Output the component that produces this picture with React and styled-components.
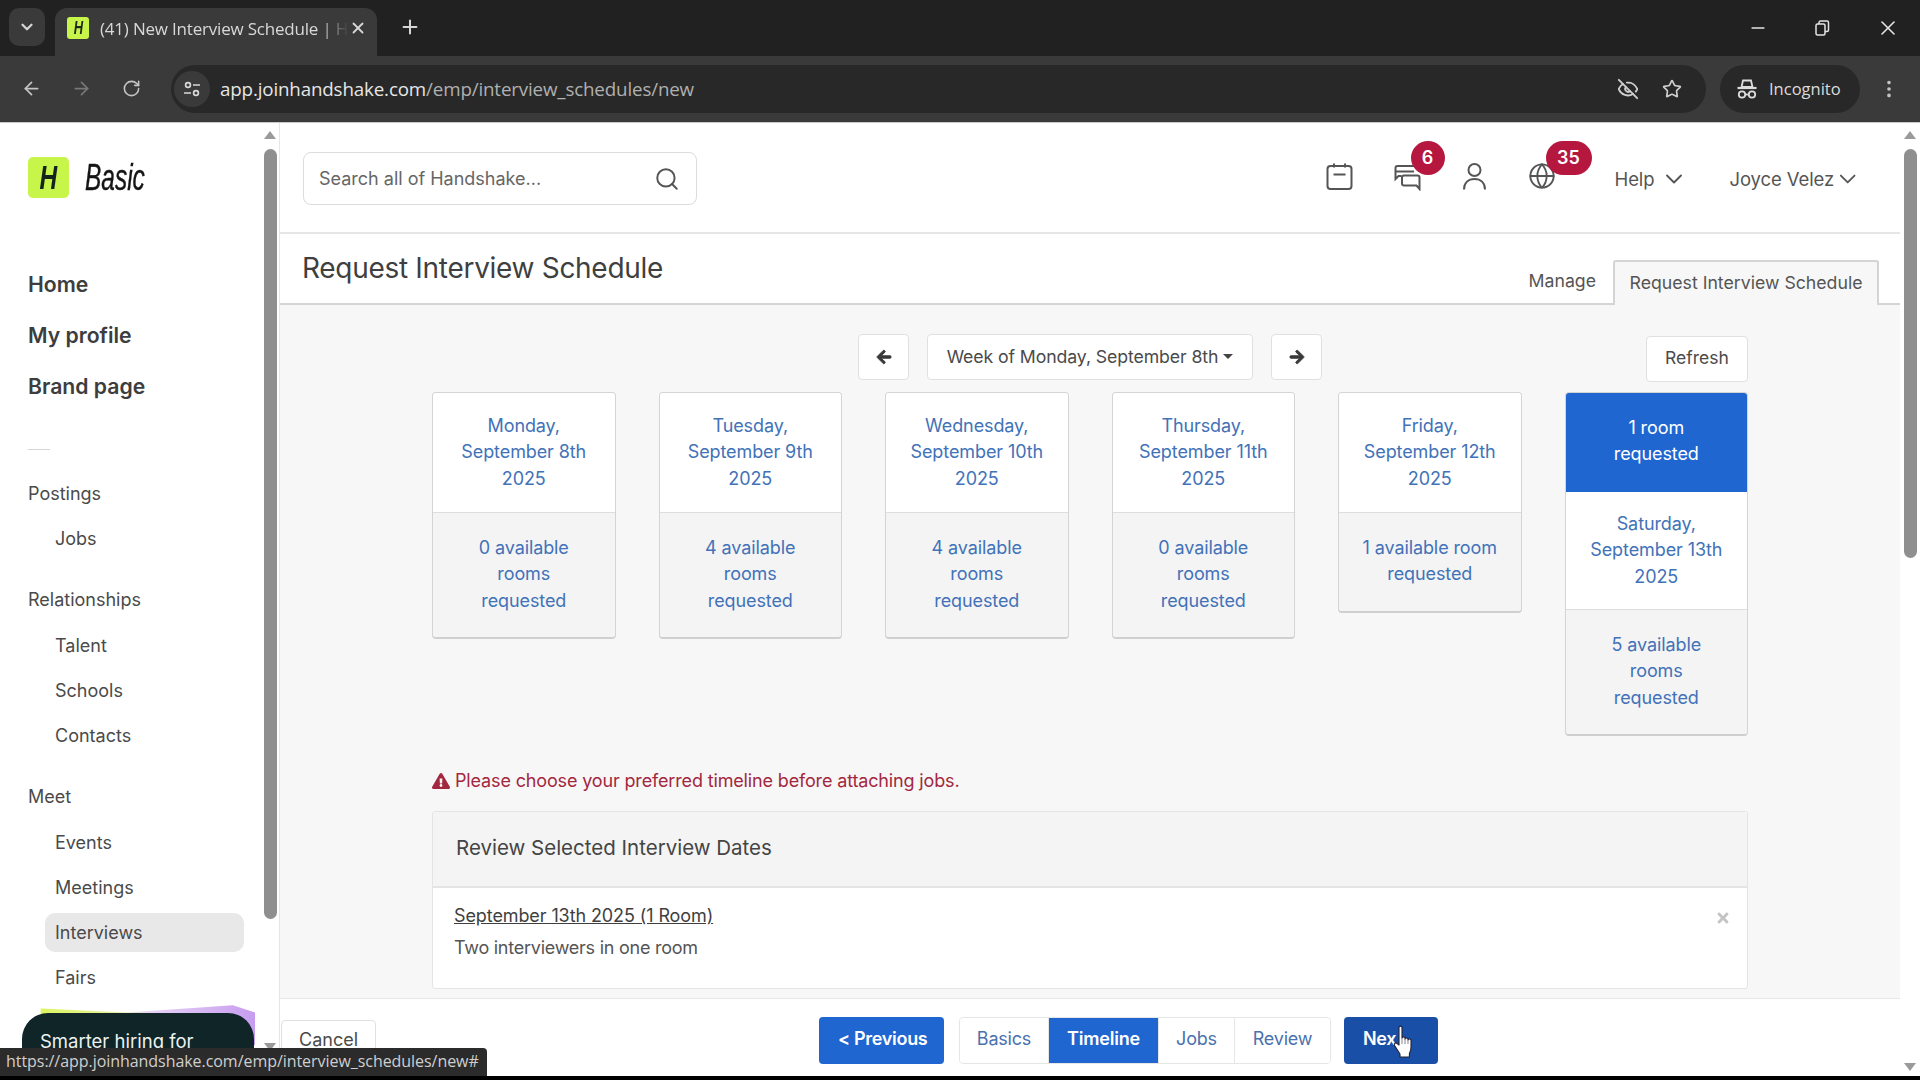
import styled, { createGlobalStyle } from "styled-components";
import {
  ArrowLeft,
  ArrowRight,
  ChevronDown,
  EyeOff,
  Globe,
  Minus,
  MoreVertical,
  Plus,
  RotateCw,
  Search,
  Star,
  X,
} from "lucide-react";
import { FaArrowLeft, FaArrowRight, FaExclamationTriangle, FaTimes } from "react-icons/fa";

const days = [
  { head: ["Monday,", "September 8th", "2025"], foot: ["0 available", "rooms", "requested"] },
  { head: ["Tuesday,", "September 9th", "2025"], foot: ["4 available", "rooms", "requested"] },
  { head: ["Wednesday,", "September 10th", "2025"], foot: ["4 available", "rooms", "requested"] },
  { head: ["Thursday,", "September 11th", "2025"], foot: ["0 available", "rooms", "requested"] },
  { head: ["Friday,", "September 12th", "2025"], foot: ["1 available room", "requested"] },
  {
    head: ["Saturday,", "September 13th", "2025"],
    foot: ["5 available", "rooms", "requested"],
    selected: ["1 room", "requested"],
  },
];

const navGroups = [
  { title: "Postings", items: ["Jobs"] },
  { title: "Relationships", items: ["Talent", "Schools", "Contacts"] },
  { title: "Meet", items: ["Events", "Meetings", "Interviews", "Fairs"] },
];

const App = () => {
  return (
    <>
      <GlobalStyle />
      <Frame>
        <TabStrip>
          <TabSearch>
            <ChevronDown size={18} strokeWidth={3} />
          </TabSearch>
          <BrowserTab>
            <Favicon>
              <NarrowH>H</NarrowH>
            </Favicon>
            <TabTitle>(41) New Interview Schedule | H</TabTitle>
            <X size={18} strokeWidth={2.4} />
          </BrowserTab>
          <NewTab>
            <Plus size={22} strokeWidth={2.2} />
          </NewTab>
          <WindowControls>
            <Minus size={20} />
            <RestoreIcon />
            <X size={24} strokeWidth={1.6} />
          </WindowControls>
        </TabStrip>

        <Toolbar>
          <ToolIcon>
            <ArrowLeft size={21} />
          </ToolIcon>
          <ToolIcon $dim>
            <ArrowRight size={21} />
          </ToolIcon>
          <ToolIcon>
            <RotateCw size={19} />
          </ToolIcon>
          <Omnibox>
            <SiteChip>
              <SiteIcon />
            </SiteChip>
            <Url>
              app.joinhandshake.com<UrlPath>/emp/interview_schedules/new</UrlPath>
            </Url>
            <OmniIcons>
              <EyeOff size={22} />
              <Star size={20} />
            </OmniIcons>
          </Omnibox>
          <IncognitoPill>
            <IncognitoIcon />
            Incognito
          </IncognitoPill>
          <ToolIcon>
            <MoreVertical size={22} />
          </ToolIcon>
        </Toolbar>

        <Page>
          <Sidebar>
            <SideContent>
              <LogoRow>
                <LogoMark>
                  <NarrowH>H</NarrowH>
                </LogoMark>
                <LogoWord>Basic</LogoWord>
              </LogoRow>
              <MainLink>Home</MainLink>
              <MainLink>My profile</MainLink>
              <MainLink>Brand page</MainLink>
              <SideDivider />
              {navGroups.map((group) => (
                <NavGroup key={group.title}>
                  <NavTitle>{group.title}</NavTitle>
                  {group.items.map((item) => (
                    <NavItem key={item} $active={item === "Interviews"}>
                      {item}
                    </NavItem>
                  ))}
                </NavGroup>
              ))}
              <PromoCard>Smarter hiring for</PromoCard>
            </SideContent>
            <ScrollTrack>
              <ScrollArrow />
              <ScrollThumb $height={770} />
              <ScrollArrow $down $push={124} />
            </ScrollTrack>
          </Sidebar>

          <Main>
            <Header>
              <SearchBox>
                <SearchText>Search all of Handshake...</SearchText>
                <Search size={26} strokeWidth={1.8} />
              </SearchBox>
              <HeaderIcons>
                <HeaderIcon>
                  <CalendarIcon />
                </HeaderIcon>
                <HeaderIcon>
                  <MessagesIcon />
                  <Badge>6</Badge>
                </HeaderIcon>
                <HeaderIcon>
                  <PersonIcon />
                </HeaderIcon>
                <HeaderIcon>
                  <Globe size={28} strokeWidth={1.6} />
                  <Badge $wide>35</Badge>
                </HeaderIcon>
              </HeaderIcons>
              <HeaderMenu $width={73} $gap={58}>
                Help <ChevronDown size={28} strokeWidth={1.6} />
              </HeaderMenu>
              <HeaderMenu $width={132} $gap={42}>
                Joyce Velez <ChevronDown size={28} strokeWidth={1.6} />
              </HeaderMenu>
            </Header>

            <TitleBar>
              <Title>Request Interview Schedule</Title>
              <TabLink>Manage</TabLink>
              <ActiveTab>Request Interview Schedule</ActiveTab>
            </TitleBar>

            <Content>
              <WeekNav>
                <WeekControls>
                  <SquareButton>
                    <FaArrowLeft size={16} stroke="currentColor" strokeWidth={30} />
                  </SquareButton>
                  <WeekSelect>
                    Week of Monday, September 8th
                    <Caret />
                  </WeekSelect>
                  <SquareButton>
                    <FaArrowRight size={16} stroke="currentColor" strokeWidth={30} />
                  </SquareButton>
                </WeekControls>
                <RefreshButton>Refresh</RefreshButton>
              </WeekNav>

              <WeekGrid>
                {days.map((day) => (
                  <DayCard key={day.head[1]}>
                    {day.selected && (
                      <DaySelected>
                        {day.selected.map((line) => (
                          <div key={line}>{line}</div>
                        ))}
                      </DaySelected>
                    )}
                    <DayHead $compact={!!day.selected}>
                      {day.head.map((line) => (
                        <div key={line}>{line}</div>
                      ))}
                    </DayHead>
                    <DayFoot>
                      {day.foot.map((line) => (
                        <div key={line}>{line}</div>
                      ))}
                    </DayFoot>
                  </DayCard>
                ))}
              </WeekGrid>

              <Warning>
                <FaExclamationTriangle size={18} />
                Please choose your preferred timeline before attaching jobs.
              </Warning>

              <ReviewPanel>
                <ReviewHead>Review Selected Interview Dates</ReviewHead>
                <ReviewBody>
                  <ReviewDate>September 13th 2025 (1 Room)</ReviewDate>
                  <ReviewNote>Two interviewers in one room</ReviewNote>
                  <RemoveIcon>
                    <FaTimes size={16} />
                  </RemoveIcon>
                </ReviewBody>
              </ReviewPanel>
            </Content>

            <Footer>
              <CancelButton>Cancel</CancelButton>
              <PrimaryButton $width={125}>&lt; Previous</PrimaryButton>
              <StepGroup>
                <Step $width={89}>Basics</Step>
                <Step $width={110} $active>
                  Timeline
                </Step>
                <Step $width={76}>Jobs</Step>
                <Step $width={95} $last>
                  Review
                </Step>
              </StepGroup>
              <PrimaryButton $width={94} $dark>
                Nex
                <HandCursor />
              </PrimaryButton>
            </Footer>
          </Main>

          <PageScroll>
            <ScrollArrow />
            <ScrollThumb $height={409} />
            <ScrollArrow $down $push={505} />
          </PageScroll>

          <StatusBubble>https://app.joinhandshake.com/emp/interview_schedules/new#</StatusBubble>
        </Page>
        <BottomEdge />
      </Frame>
    </>
  );
};

export default App;

const RestoreIcon = () => (
  <svg width="20" height="20" viewBox="0 0 20 20" fill="none" stroke="currentColor" strokeWidth="1.5">
    <rect x="4" y="6" width="9" height="11" rx="1.5" />
    <path d="M7 6V4.5C7 3.7 7.7 3 8.5 3H15c.8 0 1.5.7 1.5 1.5V12c0 .8-.7 1.5-1.5 1.5h-2" />
  </svg>
);

const SiteIcon = () => (
  <svg width="20" height="20" viewBox="0 0 20 20" fill="none" stroke="currentColor" strokeWidth="1.7">
    <circle cx="6" cy="6" r="2.4" />
    <path d="M11 6h7M2 14h7" />
    <circle cx="14" cy="14" r="2.4" />
  </svg>
);

const IncognitoIcon = () => (
  <svg width="24" height="24" viewBox="0 0 24 24" fill="none" stroke="currentColor" strokeWidth="1.8">
    <path d="M8 3.5h8l1.5 6.5h-11L8 3.5z" />
    <path d="M2.5 11h19" strokeWidth="2.2" />
    <circle cx="7" cy="17.5" r="3.2" />
    <circle cx="17" cy="17.5" r="3.2" />
    <path d="M10.2 17.5h3.6" />
  </svg>
);

const CalendarIcon = () => (
  <svg width="29" height="29" viewBox="0 0 29 29" fill="none" stroke="currentColor" strokeWidth="2">
    <rect x="2.5" y="4" width="24" height="23" rx="3" />
    <path d="M9 1.5v4M20 1.5v4M8.5 12.5h12" />
  </svg>
);

const MessagesIcon = () => (
  <svg width="29" height="29" viewBox="0 0 29 29" fill="none" stroke="currentColor" strokeWidth="2">
    <path d="M21 4H4.5C3.4 4 2.5 4.9 2.5 6v11l3-3h3" />
    <path d="M2.5 9.5H21" />
    <path d="M9 15.5c0-1.1.9-2 2-2h13.5c1.1 0 2 .9 2 2V27l-3-3.5H11c-1.1 0-2-.9-2-2v-6z" />
  </svg>
);

const PersonIcon = () => (
  <svg width="29" height="29" viewBox="0 0 29 29" fill="none" stroke="currentColor" strokeWidth="2">
    <circle cx="14.5" cy="8" r="6" />
    <path d="M4 27.5c0-7 4.5-10.5 10.5-10.5S25 20.5 25 27.5" />
  </svg>
);

const HandCursor = () => (
  <CursorSvg width="24" height="34" viewBox="0 0 24 34">
    <path
      d="M7 2.5c0-1.8 3-1.8 3 0V13c0-1.4 3-1.4 3 0v1c0-1.4 3-1.4 3 0v1c0-1.4 3-1.4 3 0v7c0 3-.8 4.6-1.6 6.6V32H8v-3c-1.6-2.4-3.6-5.6-5.4-8.4-1.2-2 1.2-3.6 2.6-2L7 20V2.5z"
      fill="#fff"
      stroke="#223"
      strokeWidth="1.1"
      strokeLinejoin="round"
    />
    <path d="M10 13v6M13 14v5M16 15v4" stroke="#667" strokeWidth="0.8" />
  </CursorSvg>
);

const GlobalStyle = createGlobalStyle`
  html, body {
    margin: 0;
    padding: 0;
    background: #000;
  }
  * {
    box-sizing: border-box;
  }
`;

const Frame = styled.div`
  width: 1920px;
  height: 1080px;
  display: flex;
  flex-direction: column;
  overflow: hidden;
  font-family: Inter, "Liberation Sans", sans-serif;
  color: #4a4a4a;
`;

const TabStrip = styled.div`
  height: 56px;
  flex: none;
  display: flex;
  align-items: flex-end;
  background: #212121;
  color: #d6d6d6;
  padding-left: 9px;
`;

const TabSearch = styled.div`
  width: 36px;
  height: 38px;
  margin-bottom: 10px;
  border-radius: 10px;
  background: #3a3a3a;
  display: flex;
  align-items: center;
  justify-content: center;
`;

const BrowserTab = styled.div`
  width: 322px;
  height: 48px;
  margin-left: 10px;
  padding: 0 10px 8px 12px;
  border-radius: 12px 12px 0 0;
  background: #3a3a3a;
  display: flex;
  align-items: center;
`;

const NarrowH = styled.span`
  display: inline-block;
  transform: scaleX(0.72);
`;

const Favicon = styled.div`
  width: 22px;
  height: 22px;
  flex: none;
  border-radius: 3px;
  background: #c8f54a;
  color: #1c2a1c;
  font: italic 700 18px/22px "Liberation Sans", sans-serif;
  text-align: center;
`;

const TabTitle = styled.div`
  flex: 1;
  margin-left: 11px;
  font: 17px "Open Sans", sans-serif;
  letter-spacing: -0.2px;
  white-space: nowrap;
  overflow: hidden;
  color: #d8d8d8;
  -webkit-mask-image: linear-gradient(90deg, #000 88%, transparent 100%);
`;

const NewTab = styled.div`
  margin: 0 0 10px 22px;
  height: 38px;
  display: flex;
  align-items: center;
`;

const WindowControls = styled.div`
  margin-left: auto;
  height: 56px;
  width: 172px;
  padding-right: 20px;
  display: flex;
  align-items: center;
  justify-content: space-between;
  color: #e4e4e4;
`;

const Toolbar = styled.div`
  height: 67px;
  flex: none;
  display: flex;
  align-items: center;
  padding: 0 0 1px 6px;
  background: #3a3a3a;
  border-bottom: 1px solid #c9c9c9;
  color: #c4c4c4;
`;

const ToolIcon = styled.div`
  width: 50px;
  height: 40px;
  flex: none;
  display: flex;
  align-items: center;
  justify-content: center;
  color: ${(props) => (props.$dim ? "#777" : "#c4c4c4")};
`;

const Omnibox = styled.div`
  width: 1535px;
  height: 48px;
  margin-left: 15px;
  padding: 0 24px 0 3px;
  border-radius: 24px;
  background: #282828;
  display: flex;
  align-items: center;
`;

const SiteChip = styled.div`
  width: 36px;
  height: 36px;
  border-radius: 50%;
  background: #3a3a3a;
  display: flex;
  align-items: center;
  justify-content: center;
  color: #d8d8d8;
`;

const Url = styled.div`
  margin-left: 10px;
  font: 18.75px "Open Sans", sans-serif;
  letter-spacing: -0.15px;
  color: #e6e6e6;
`;

const UrlPath = styled.span`
  color: #b0b0b0;
`;

const OmniIcons = styled.div`
  margin-left: auto;
  display: flex;
  align-items: center;
  gap: 23px;
  color: #cfcfcf;
`;

const IncognitoPill = styled.div`
  width: 140px;
  height: 48px;
  margin: 0 4px 0 14px;
  padding-left: 15px;
  border-radius: 24px;
  background: #282828;
  color: #dcdcdc;
  font: 16.5px "Open Sans", sans-serif;
  display: flex;
  align-items: center;
  gap: 10px;
  flex: none;
`;

const Page = styled.div`
  position: relative;
  height: 953px;
  flex: none;
  display: flex;
  background: #fff;
  overflow: hidden;
`;

const Sidebar = styled.aside`
  width: 280px;
  flex: none;
  display: flex;
  border-right: 1px solid #e6e6e6;
`;

const SideContent = styled.div`
  width: 261px;
  flex: none;
  padding: 34px 0 0 28px;
  isolation: isolate;
`;

const LogoRow = styled.div`
  height: 41px;
  margin-bottom: 60px;
  display: flex;
  align-items: center;
  gap: 16px;
`;

const LogoMark = styled.div`
  width: 41px;
  height: 41px;
  border-radius: 5px;
  background: #c8f54a;
  color: #14231c;
  font: italic 700 34px/41px "Liberation Sans", sans-serif;
  text-align: center;
`;

const LogoWord = styled.div`
  font: italic 400 36px "Liberation Sans", sans-serif;
  -webkit-text-stroke: 0.4px #151515;
  color: #151515;
  transform: scaleX(0.68);
  transform-origin: left center;
`;

const MainLink = styled.div`
  height: 51px;
  display: flex;
  align-items: center;
  font-size: 21.2px;
  font-weight: 600;
  color: #3d3d3d;
`;

const SideDivider = styled.div`
  width: 22px;
  height: 1px;
  margin: 38px 0 21px;
  background: #d5d5d5;
`;

const NavGroup = styled.div`
  margin-bottom: 15.7px;
  font-size: 18px;
`;

const NavTitle = styled.div`
  height: 45.3px;
  display: flex;
  align-items: center;
  color: #4a4a4a;
`;

const NavItem = styled.div`
  width: 199px;
  height: 45.3px;
  margin-left: 17px;
  display: flex;
  align-items: center;
  position: relative;
  z-index: 0;
  padding-left: 10px;
  color: #4a4a4a;

  ${(props) =>
    props.$active &&
    `
    &::before {
      content: "";
      position: absolute;
      inset: 3px 0 3px 0;
      border-radius: 10px;
      background: #e8e8e8;
      z-index: -1;
    }
  `}
`;

const PromoCard = styled.div`
  position: relative;
  width: 232px;
  height: 120px;
  margin: -3px 0 0 -6px;
  padding: 17px 18px;
  border-radius: 26px;
  background: #0f2528;
  color: #eef2f0;
  font-size: 18.5px;

  &::before {
    content: "";
    position: absolute;
    z-index: -1;
    top: -8px;
    left: 12px;
    right: -1px;
    height: 40px;
    background: linear-gradient(90deg, #d9f55b 0%, #e6f09a 38%, #e5d3f5 52%, #c79cf0 100%);
    clip-path: polygon(3% 8%, 42% 18%, 90% 0, 100% 18%, 100% 100%, 3% 100%);
  }
`;

const ScrollTrack = styled.div`
  width: 18px;
  flex: none;
  display: flex;
  flex-direction: column;
  align-items: center;
  padding-top: 8px;
`;

const ScrollArrow = styled.div`
  width: 0;
  height: 0;
  flex: none;
  border-left: 6px solid transparent;
  border-right: 6px solid transparent;
  border-bottom: ${(props) => (props.$down ? "0" : "8px solid #9a9a9a")};
  border-top: ${(props) => (props.$down ? "8px solid #9a9a9a" : "0")};
  margin-top: ${(props) => props.$push || 0}px;
`;

const ScrollThumb = styled.div`
  width: 13px;
  height: ${(props) => props.$height}px;
  flex: none;
  margin-top: 10px;
  border-radius: 7px;
  background: #8f8f8f;
`;

const Main = styled.main`
  width: 1620px;
  flex: none;
  display: flex;
  flex-direction: column;
`;

const PageScroll = styled.div`
  width: 20px;
  flex: none;
  display: flex;
  flex-direction: column;
  align-items: center;
  padding-top: 8px;
`;

const Header = styled.header`
  height: 111px;
  flex: none;
  display: flex;
  align-items: center;
  padding: 2px 0 0 23px;
  border-bottom: 2px solid #e6e6e6;
`;

const SearchBox = styled.div`
  width: 394px;
  height: 53px;
  padding: 0 16px 0 15px;
  border: 1px solid #dcdcdc;
  border-radius: 8px;
  display: flex;
  align-items: center;
  justify-content: space-between;
  color: #555;
`;

const SearchText = styled.div`
  font-size: 18px;
  color: #666;
`;

const HeaderIcons = styled.div`
  margin-left: 628px;
  display: flex;
  gap: 38.5px;
  color: #555;
`;

const HeaderIcon = styled.div`
  position: relative;
  width: 29px;
  height: 29px;
  margin-top: -4px;
`;

const Badge = styled.div`
  position: absolute;
  top: -21px;
  left: 18px;
  min-width: ${(props) => (props.$wide ? "46px" : "34px")};
  height: 34px;
  border-radius: 17px;
  background: #b5173f;
  color: #fff;
  font-size: 18px;
  font-weight: 600;
  line-height: 34px;
  text-align: center;
`;

const HeaderMenu = styled.div`
  width: ${(props) => props.$width}px;
  margin-left: ${(props) => props.$gap}px;
  display: flex;
  align-items: center;
  justify-content: space-between;
  font-size: 18.5px;
  letter-spacing: -0.1px;
  color: #555;
  white-space: nowrap;
`;

const TitleBar = styled.div`
  height: 71px;
  flex: none;
  display: flex;
  align-items: flex-end;
  padding: 0 0 0 22px;
  border-bottom: 2px solid #d4d4d4;
  position: relative;
`;

const Title = styled.h1`
  margin: 0 auto 18px 0;
  font-size: 28px;
  font-weight: 400;
  letter-spacing: -0.3px;
  color: #3f3f3f;
`;

const TabLink = styled.div`
  margin: 0 17px 12px 0;
  font-size: 17.7px;
  color: #555;
`;

const ActiveTab = styled.div`
  width: 266px;
  height: 45px;
  margin: 0 21px -2px 0;
  border: 2px solid #d4d4d4;
  border-bottom: 0;
  border-radius: 3px 3px 0 0;
  background: #f7f7f7;
  font-size: 17.7px;
  line-height: 41px;
  text-align: center;
  color: #555;
  white-space: nowrap;
`;

const Content = styled.div`
  height: 693px;
  flex: none;
  padding: 29px 152px 0;
  background: #f7f7f7;
`;

const WeekNav = styled.div`
  height: 46px;
  display: grid;
  grid-template-columns: 1fr auto 1fr;
  margin-bottom: 12px;
`;

const WeekControls = styled.div`
  grid-column: 2;
  display: flex;
  gap: 18px;
`;

const SquareButton = styled.div`
  width: 51px;
  height: 46px;
  border: 1px solid #e0e0e0;
  border-radius: 4px;
  background: #fff;
  display: flex;
  align-items: center;
  justify-content: center;
  color: #3a3a3a;
`;

const WeekSelect = styled.div`
  width: 326px;
  height: 46px;
  padding-bottom: 2px;
  border: 1px solid #e0e0e0;
  border-radius: 4px;
  background: #fff;
  display: flex;
  align-items: center;
  justify-content: center;
  gap: 5px;
  font-size: 17.7px;
  letter-spacing: -0.1px;
  color: #4a4a4a;
  white-space: nowrap;
`;

const Caret = styled.span`
  width: 0;
  height: 0;
  border-left: 5px solid transparent;
  border-right: 5px solid transparent;
  border-top: 5px solid #444;
`;

const RefreshButton = styled.div`
  grid-column: 3;
  justify-self: end;
  width: 102px;
  height: 46px;
  margin-top: 2px;
  border: 1px solid #e0e0e0;
  border-radius: 4px;
  background: #fff;
  font-size: 17.5px;
  line-height: 42px;
  text-align: center;
  color: #4a4a4a;
`;

const WeekGrid = styled.div`
  display: grid;
  grid-template-columns: repeat(6, 183.5px);
  justify-content: space-between;
  align-items: start;
`;

const DayCard = styled.div`
  border: 1px solid #d4d4d4;
  border-bottom: 2px solid #cfcfcf;
  border-radius: 4px;
  overflow: hidden;
  background: #f4f4f5;
  font-size: 18px;
  line-height: 26.3px;
  letter-spacing: -0.1px;
  text-align: center;
  color: #4272b8;
`;

const DaySelected = styled.div`
  height: 100px;
  margin: -1px -1px 0;
  padding-top: 23px;
  background: #1f66d1;
  color: #fff;
`;

const DayHead = styled.div`
  height: ${(props) => (props.$compact ? "118px" : "120px")};
  padding-top: ${(props) => (props.$compact ? "19px" : "20px")};
  background: #fff;
  border-bottom: 1px solid #dedede;
`;

const DayFoot = styled.div`
  padding: 22px 0 23px;
`;

const Warning = styled.div`
  height: 24px;
  margin-top: 33px;
  display: flex;
  align-items: center;
  gap: 5px;
  font-size: 18px;
  letter-spacing: -0.15px;
  color: #a3283f;
`;

const ReviewPanel = styled.section`
  height: 178px;
  margin-top: 18px;
  border: 1px solid #e4e4e4;
  border-radius: 3px;
  background: #fff;
`;

const ReviewHead = styled.div`
  height: 76px;
  padding-left: 23px;
  background: #f4f4f4;
  border-bottom: 2px solid #e4e4e4;
  font-size: 20.5px;
  line-height: 72px;
  color: #444;
`;

const ReviewBody = styled.div`
  position: relative;
  padding: 12px 21px;
  font-size: 18px;
  line-height: 32px;
`;

const ReviewDate = styled.div`
  text-decoration: underline;
  color: #3f3f3f;
  letter-spacing: -0.1px;
`;

const ReviewNote = styled.div`
  color: #555;
  letter-spacing: -0.25px;
`;

const RemoveIcon = styled.div`
  position: absolute;
  top: 16px;
  right: 16px;
  color: #c4c4c4;
`;

const Footer = styled.footer`
  height: 78px;
  flex: none;
  display: flex;
  align-items: flex-start;
  padding: 18px 0 0 1px;
  border-top: 1px solid #e8e8e8;
`;

const CancelButton = styled.div`
  width: 95px;
  height: 48px;
  margin: 3px 443px 0 0;
  border: 1px solid #e0e0e0;
  border-radius: 4px;
  background: #fff;
  font-size: 18px;
  line-height: 37px;
  text-align: center;
  color: #4a4a4a;
`;

const PrimaryButton = styled.div`
  position: relative;
  width: ${(props) => props.$width}px;
  height: 47px;
  border-radius: 4px;
  background: ${(props) => (props.$dark ? "#1a4fa8" : "#1f66d1")};
  color: #fff;
  font-size: 18px;
  font-weight: 600;
  letter-spacing: -0.3px;
  line-height: 44px;
  padding-left: 19px;
`;

const StepGroup = styled.div`
  margin: 0 13px 0 15px;
  height: 47px;
  display: flex;
  border: 1px solid #e6e6e6;
  border-radius: 4px;
  background: #fff;
  overflow: hidden;
`;

const Step = styled.div`
  width: ${(props) => props.$width}px;
  border-right: ${(props) => (props.$last ? "0" : "1px solid #e6e6e6")};
  background: ${(props) => (props.$active ? "#1f66d1" : "#fff")};
  color: ${(props) => (props.$active ? "#fff" : "#4a72ad")};
  font-size: 18px;
  font-weight: ${(props) => (props.$active ? 600 : 400)};
  letter-spacing: -0.2px;
  line-height: 42px;
  text-align: center;
`;

const CursorSvg = styled.svg`
  position: absolute;
  left: 48px;
  top: 8px;
`;

const StatusBubble = styled.div`
  position: absolute;
  left: 0;
  bottom: 0;
  width: 487px;
  height: 28px;
  padding-left: 6px;
  background: #2b2b2b;
  border-radius: 0 4px 0 0;
  color: #cfcfcf;
  font: 16px/27px "Open Sans", sans-serif;
  letter-spacing: -0.05px;
  white-space: nowrap;
`;

const BottomEdge = styled.div`
  flex: 1;
  background: #000;
`;
